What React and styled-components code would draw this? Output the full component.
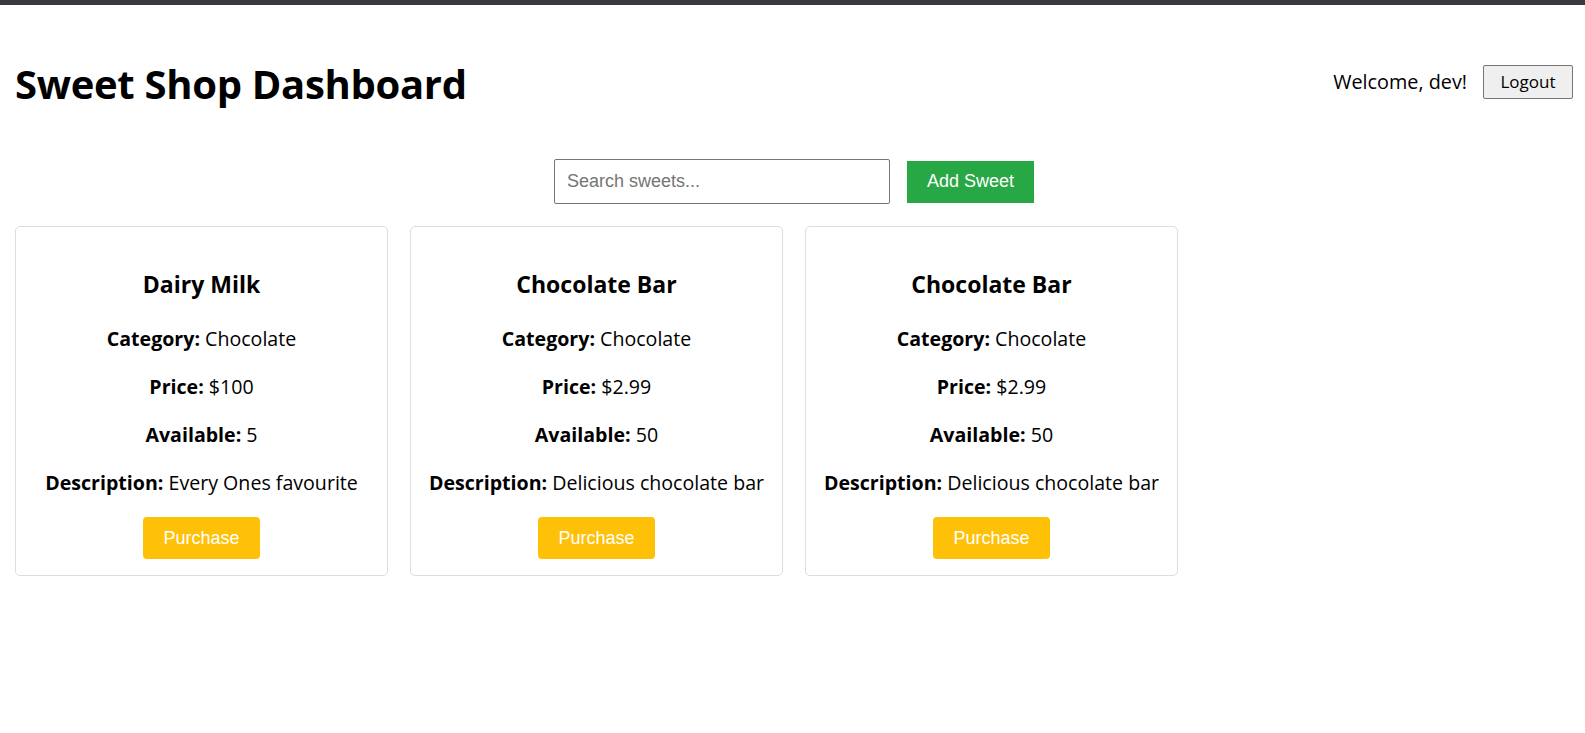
import styled, { createGlobalStyle } from "styled-components";

const GlobalStyle = createGlobalStyle`
  * {
    box-sizing: border-box;
  }

  body {
    margin: 0;
    background: #fff;
    color: #000;
    font-family: "Open Sans", "Noto Sans", sans-serif;
  }
`;

// Styled components
const TopBar = styled.div`
  height: 5px;
  background-color: #3a393e;
`;

const Page = styled.div`
  padding: 0 12px 0 15px;
`;

const Header = styled.header`
  display: flex;
  align-items: center;
  justify-content: space-between;
  padding-top: 52px;
`;

const Title = styled.h1`
  margin: 0;
  font-size: 40px;
  line-height: 53px;
  font-weight: 700;
  letter-spacing: -0.3px;
`;

const UserBox = styled.div`
  display: flex;
  align-items: center;
  gap: 16px;
  margin-top: -4px;
`;

const Welcome = styled.span`
  font-size: 19.8px;
`;

const LogoutButton = styled.button`
  width: 90px;
  height: 34px;
  font-family: "Open Sans", sans-serif;
  font-size: 17px;
  color: #000;
  background-color: #efefef;
  border: 1px solid #767676;
  border-radius: 2px;
  cursor: pointer;
`;

const Toolbar = styled.div`
  display: flex;
  align-items: center;
  justify-content: center;
  gap: 17px;
  margin-top: 49px;
`;

const SearchInput = styled.input`
  width: 336px;
  height: 45px;
  padding: 0 12px;
  font-family: "Liberation Sans", Arial, sans-serif;
  font-size: 18px;
  border: 1px solid #767676;
  border-radius: 2px;

  &::placeholder {
    color: #757575;
  }
`;

const ActionButton = styled.button`
  height: 42px;
  padding: 0 20px;
  font-family: "Liberation Sans", Arial, sans-serif;
  font-size: 18px;
  color: #fff;
  background-color: ${(p) => p.$bg};
  border: none;
  border-radius: ${(p) => p.$radius || "0"};
  cursor: pointer;
`;

const Grid = styled.div`
  display: flex;
  gap: 22px;
  margin-top: 22px;
`;

const Card = styled.div`
  width: 373px;
  padding: 0 16px 16px;
  border: 1px solid #ddd;
  border-radius: 5px;
  text-align: center;
`;

const CardTitle = styled.h3`
  margin: 41px 0 25px;
  font-size: 23px;
  line-height: 32px;
  font-weight: 700;
`;

const Field = styled.p`
  margin: 0 0 20px;
  font-size: 19.6px;
  line-height: 28px;

  b {
    font-weight: 700;
  }
`;

const sweets = [
  {
    id: 1,
    name: "Dairy Milk",
    category: "Chocolate",
    price: 100,
    quantity: 5,
    description: "Every Ones favourite",
  },
  {
    id: 2,
    name: "Chocolate Bar",
    category: "Chocolate",
    price: 2.99,
    quantity: 50,
    description: "Delicious chocolate bar",
  },
  {
    id: 3,
    name: "Chocolate Bar",
    category: "Chocolate",
    price: 2.99,
    quantity: 50,
    description: "Delicious chocolate bar",
  },
];

// Main component
function App() {
  return (
    <>
      <GlobalStyle />
      <TopBar />
      <Page>
        <Header>
          <Title>Sweet Shop Dashboard</Title>
          <UserBox>
            <Welcome>Welcome, dev!</Welcome>
            <LogoutButton>Logout</LogoutButton>
          </UserBox>
        </Header>

        <Toolbar>
          <SearchInput placeholder="Search sweets..." />
          <ActionButton $bg="#28a745">Add Sweet</ActionButton>
        </Toolbar>

        <Grid>
          {sweets.map(({ id, name, category, price, quantity, description }) => (
            <Card key={id}>
              <CardTitle>{name}</CardTitle>
              <Field>
                <b>Category:</b> {category}
              </Field>
              <Field>
                <b>Price:</b> ${price}
              </Field>
              <Field>
                <b>Available:</b> {quantity}
              </Field>
              <Field>
                <b>Description:</b> {description}
              </Field>
              <ActionButton $bg="#ffc107" $radius="4px">
                Purchase
              </ActionButton>
            </Card>
          ))}
        </Grid>
      </Page>
    </>
  );
}

export default App;
